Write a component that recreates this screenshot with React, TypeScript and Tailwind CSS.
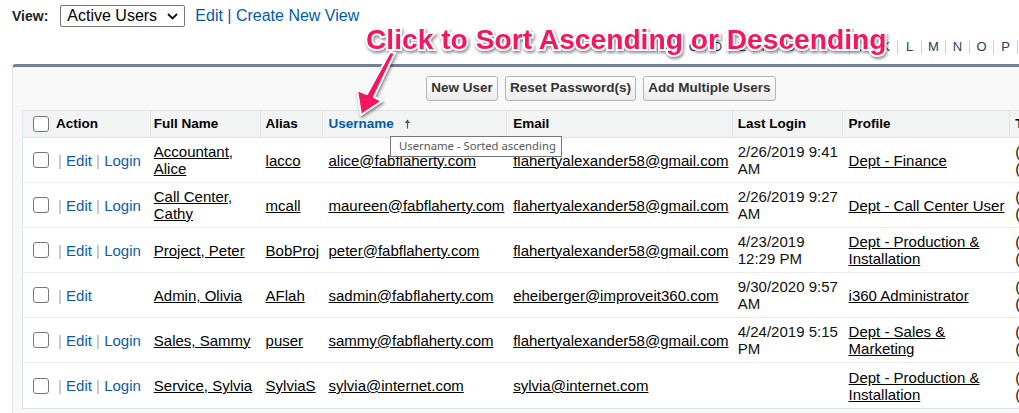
import React from "react";

type Row = {
  login: boolean;
  name: string;
  alias: string;
  username: string;
  email: string;
  lastLogin: string[];
  profile: string;
};

const rows: Row[] = [
  { login: true, name: "Accountant, Alice", alias: "lacco", username: "alice@fabflaherty.com", email: "flahertyalexander58@gmail.com", lastLogin: ["2/26/2019 9:41", "AM"], profile: "Dept - Finance" },
  { login: true, name: "Call Center, Cathy", alias: "mcall", username: "maureen@fabflaherty.com", email: "flahertyalexander58@gmail.com", lastLogin: ["2/26/2019 9:27", "AM"], profile: "Dept - Call Center User" },
  { login: true, name: "Project, Peter", alias: "BobProj", username: "peter@fabflaherty.com", email: "flahertyalexander58@gmail.com", lastLogin: ["4/23/2019", "12:29 PM"], profile: "Dept - Production & Installation" },
  { login: false, name: "Admin, Olivia", alias: "AFlah", username: "sadmin@fabflaherty.com", email: "eheiberger@improveit360.com", lastLogin: ["9/30/2020 9:57", "AM"], profile: "i360 Administrator" },
  { login: true, name: "Sales, Sammy", alias: "puser", username: "sammy@fabflaherty.com", email: "flahertyalexander58@gmail.com", lastLogin: ["4/24/2019 5:15", "PM"], profile: "Dept - Sales & Marketing" },
  { login: true, name: "Service, Sylvia", alias: "SylviaS", username: "sylvia@internet.com", email: "sylvia@internet.com", lastLogin: [], profile: "Dept - Production & Installation" },
];

const letters = "A B C D E F G H I J K L M N O P Q R S T U V W X Y Z".split(" ").concat(["Other", "All"]);

const Checkbox = () => (
  <span className="inline-block w-4 h-4 shrink-0 rounded-[3px] border border-[#767676] bg-white" />
);

const Button = ({ label, w }: { label: string; w: string }) => (
  <div className={`${w} h-[25px] flex items-center justify-center rounded-[3px] border border-[#b5b5b5] bg-gradient-to-b from-[#ffffff] to-[#ececec] text-[13.5px] font-bold text-[#333]`}>
    {label}
  </div>
);

const App = () => {
  return (
    <div className="relative w-[1019px] h-[413px] overflow-hidden bg-white font-['Liberation_Sans',Arial,sans-serif] text-black">
      <div className="w-[1400px]">
        {/* view selector */}
        <div className="flex items-center h-[22px] mt-[5px] pl-[12px]">
          <span className="text-[14px] font-bold text-[#222]">View:</span>
          <div className="ml-[12px] w-[125px] h-[22px] flex items-center justify-between pl-[6px] pr-[6px] border border-[#767676] rounded-[2px] text-[16px]">
            <span>Active Users</span>
            <svg width="11" height="7" viewBox="0 0 11 7">
              <polyline points="1,1 5.5,5.5 10,1" fill="none" stroke="#111" strokeWidth="1.8" />
            </svg>
          </div>
          <span className="ml-[10px] text-[16px] text-[#015ba7]">Edit | Create New View</span>
        </div>

        {/* alphabet */}
        <div className="flex mt-[13px] h-[14px] pl-[634px] w-max">
          {letters.map((l) => (
            <div key={l} className={`${l.length > 1 ? "px-[6px]" : "w-[24px]"} shrink-0 h-[14px] flex items-center justify-center border-r border-[#cfcfcf] text-[13px] leading-[14px] text-[#2d3d55]`}>
              {l}
            </div>
          ))}
        </div>

        {/* panel */}
        <div className="mt-[10px] ml-[12px] w-[1180px] h-[400px] bg-[#f8f8f8] border-t-[3px] border-t-[#747e96] border-l border-l-[#e3e3e3] rounded-tl-[4px] pl-[9px] pt-[9px]">
          <div className="flex gap-[7px] pl-[404px]">
            <Button label="New User" w="w-[72px]" />
            <Button label="Reset Password(s)" w="w-[131px]" />
            <Button label="Add Multiple Users" w="w-[133px]" />
          </div>

          <div className="mt-[9px] w-[1158px] bg-white border border-[#e0e3e5]">
            {/* header */}
            <div className="flex h-[27px] bg-[#f2f3f3] border-b border-[#e0e3e5] text-[13.5px] font-bold">
              <div className="w-[127px] flex items-center pl-[10px]">
                <Checkbox />
                <span className="ml-[7px]">Action</span>
              </div>
              <div className="w-[110px] flex items-center pl-[3px] border-l border-[#e0e3e5]">Full Name</div>
              <div className="w-[62px] flex items-center pl-[5px] border-l border-[#e0e3e5]">Alias</div>
              <div className="w-[185px] flex items-center pl-[6px] border-l border-[#e0e3e5] text-[#015ba7]">
                Username
                <svg className="ml-[10px]" width="7" height="10" viewBox="0 0 7 10">
                  <path d="M3.5 0.5 L0.8 4 L6.2 4 Z" fill="#555" />
                  <line x1="3.5" y1="3.5" x2="3.5" y2="9.5" stroke="#555" strokeWidth="1.2" />
                </svg>
              </div>
              <div className="w-[226px] flex items-center pl-[6px] border-l border-[#e0e3e5]">Email</div>
              <div className="w-[110px] flex items-center pl-[5px] border-l border-[#e0e3e5]">Last Login</div>
              <div className="w-[168px] flex items-center pl-[6px] border-l border-[#e0e3e5]">Profile</div>
              <div className="w-[170px] flex items-center pl-[5px] border-l border-[#e0e3e5]">Time Zone</div>
            </div>

            {/* rows */}
            {rows.map((r, i) => (
              <div key={i} className={`flex h-[45px] items-center text-[15px] leading-[17px] ${i < rows.length - 1 ? "border-b border-[#ededed]" : ""}`}>
                <div className="w-[127px] flex items-center pl-[10px]">
                  <Checkbox />
                  <span className="ml-[9px] text-[#0b5cab]">
                    <span className="text-[#c2ab92]">|</span> Edit
                    {r.login && (
                      <>
                        {" "}
                        <span className="text-[#c2ab92]">|</span> Login
                      </>
                    )}
                  </span>
                </div>
                <div className="w-[110px] pl-[3px] pr-[4px] border-l border-transparent">
                  <span className="underline">{r.name}</span>
                </div>
                <div className="w-[62px] pl-[5px] border-l border-transparent">
                  <span className="underline">{r.alias}</span>
                </div>
                <div className="w-[185px] pl-[6px] border-l border-transparent">
                  <span className="underline">{r.username}</span>
                </div>
                <div className="w-[226px] pl-[6px] border-l border-transparent">
                  <span className="underline">{r.email}</span>
                </div>
                <div className="w-[110px] pl-[5px] pr-[2px] border-l border-transparent text-[#111]">
                  {r.lastLogin.map((t) => (
                    <div key={t}>{t}</div>
                  ))}
                </div>
                <div className="w-[168px] pl-[6px] pr-[3px] border-l border-transparent">
                  <span className="underline">{r.profile}</span>
                </div>
                <div className="w-[170px] pl-[5px] border-l border-transparent text-[#111]">
                  <div>(GMT-05:00) Eastern</div>
                  <div>(America/New_York)</div>
                </div>
              </div>
            ))}
          </div>
        </div>
      </div>

      {/* callout annotation */}
      <div className="absolute left-[366px] top-[25px] z-10 text-[28.2px] leading-[28px] font-bold whitespace-nowrap text-[#f2175e] [-webkit-text-stroke:4px_#ffffff] [paint-order:stroke_fill] drop-shadow-[1px_2px_1.5px_rgba(0,0,0,0.45)]">
        Click to Sort Ascending or Descending
      </div>
      <svg className="absolute left-[340px] top-[45px] z-10 drop-shadow-[1px_2px_1.5px_rgba(0,0,0,0.45)]" width="70" height="75" viewBox="0 0 70 75">
        <polygon points="50,7 55,8 34,52 42,56 21,70 17,45 27,49" fill="#f2175e" stroke="#ffffff" strokeWidth="2" strokeLinejoin="round" />
      </svg>

      {/* tooltip */}
      <div className="absolute left-[390px] top-[136px] z-20 w-[172px] h-[21px] flex items-center pl-[8px] bg-white border border-[#767676] text-[11.3px] text-[#575757] font-['Noto_Sans',sans-serif] whitespace-nowrap">
        Username - Sorted ascending
      </div>
    </div>
  );
};

export default App;
